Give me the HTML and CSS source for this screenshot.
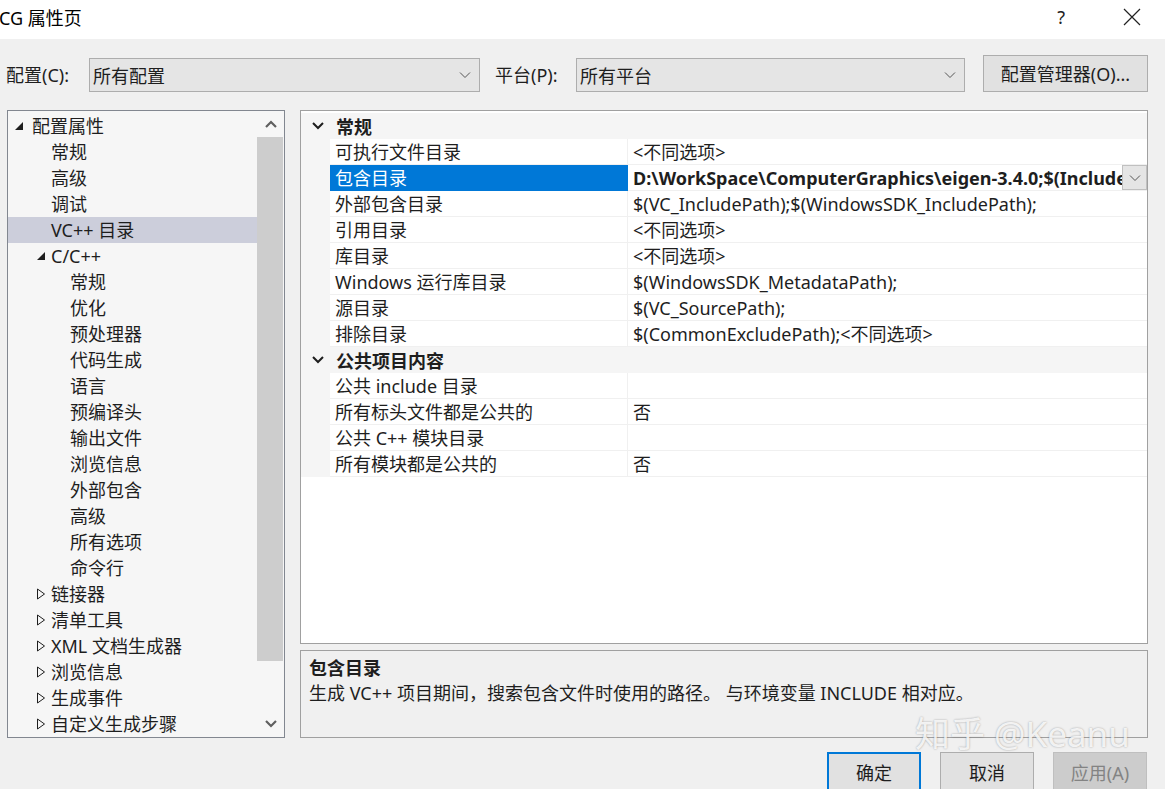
FILE: index.html
```html
<!DOCTYPE html>
<html lang="zh-CN">
<head>
<meta charset="utf-8">
<title>CG 属性页</title>
<link rel="stylesheet" href="styles.css">
</head>
<body>
<div class="dialog">
  <div class="titlebar">
    <div class="title">CG 属性页</div>
    <div class="title-actions">
      <span class="help">?</span>
      <svg class="close" width="18" height="18" viewBox="0 0 18 18"><path d="M1 1 L17 17 M17 1 L1 17" stroke="#222" stroke-width="1.2" fill="none"/></svg>
    </div>
  </div>

  <div class="config-row">
    <span class="label lbl-config">配置(C):</span>
    <div class="combo combo-config"><span>所有配置</span><svg class="chev" width="12" height="8" viewBox="0 0 12 8"><path d="M1 1.5 L6 6.5 L11 1.5" stroke="#555" stroke-width="1" fill="none"/></svg></div>
    <span class="label lbl-platform">平台(P):</span>
    <div class="combo combo-platform"><span>所有平台</span><svg class="chev" width="12" height="8" viewBox="0 0 12 8"><path d="M1 1.5 L6 6.5 L11 1.5" stroke="#555" stroke-width="1" fill="none"/></svg></div>
    <button class="btn btn-manager">配置管理器(O)...</button>
  </div>

  <div class="main">
    <div class="tree">
      <div class="tree-items">
        <div class="ti l0"><svg class="tri" width="10" height="10" viewBox="0 0 10 10"><path d="M9 1 L9 9 L1 9 Z" fill="#1e1e1e"/></svg>配置属性</div>
        <div class="ti l1">常规</div>
        <div class="ti l1">高级</div>
        <div class="ti l1">调试</div>
        <div class="ti l1 sel">VC++ 目录</div>
        <div class="ti l1x"><svg class="tri" width="10" height="10" viewBox="0 0 10 10"><path d="M9 1 L9 9 L1 9 Z" fill="#1e1e1e"/></svg>C/C++</div>
        <div class="ti l2">常规</div>
        <div class="ti l2">优化</div>
        <div class="ti l2">预处理器</div>
        <div class="ti l2">代码生成</div>
        <div class="ti l2">语言</div>
        <div class="ti l2">预编译头</div>
        <div class="ti l2">输出文件</div>
        <div class="ti l2">浏览信息</div>
        <div class="ti l2">外部包含</div>
        <div class="ti l2">高级</div>
        <div class="ti l2">所有选项</div>
        <div class="ti l2">命令行</div>
        <div class="ti l1x"><svg class="tri" width="10" height="12" viewBox="0 0 10 12"><path d="M1.5 1 L8.5 6 L1.5 11 Z" stroke="#1e1e1e" stroke-width="1" fill="none"/></svg>链接器</div>
        <div class="ti l1x"><svg class="tri" width="10" height="12" viewBox="0 0 10 12"><path d="M1.5 1 L8.5 6 L1.5 11 Z" stroke="#1e1e1e" stroke-width="1" fill="none"/></svg>清单工具</div>
        <div class="ti l1x"><svg class="tri" width="10" height="12" viewBox="0 0 10 12"><path d="M1.5 1 L8.5 6 L1.5 11 Z" stroke="#1e1e1e" stroke-width="1" fill="none"/></svg>XML 文档生成器</div>
        <div class="ti l1x"><svg class="tri" width="10" height="12" viewBox="0 0 10 12"><path d="M1.5 1 L8.5 6 L1.5 11 Z" stroke="#1e1e1e" stroke-width="1" fill="none"/></svg>浏览信息</div>
        <div class="ti l1x"><svg class="tri" width="10" height="12" viewBox="0 0 10 12"><path d="M1.5 1 L8.5 6 L1.5 11 Z" stroke="#1e1e1e" stroke-width="1" fill="none"/></svg>生成事件</div>
        <div class="ti l1x"><svg class="tri" width="10" height="12" viewBox="0 0 10 12"><path d="M1.5 1 L8.5 6 L1.5 11 Z" stroke="#1e1e1e" stroke-width="1" fill="none"/></svg>自定义生成步骤</div>
      </div>
      <div class="vscroll">
        <div class="sb-arrow"><svg width="14" height="10" viewBox="0 0 14 10"><path d="M2 8 L7 3 L12 8" stroke="#606060" stroke-width="2.2" fill="none"/></svg></div>
        <div class="sb-track"><div class="sb-thumb"></div></div>
        <div class="sb-arrow"><svg width="14" height="10" viewBox="0 0 14 10"><path d="M2 2 L7 7 L12 2" stroke="#606060" stroke-width="2.2" fill="none"/></svg></div>
      </div>
    </div>

    <div class="right">
      <div class="grid">
        <div class="cat"><svg class="cat-chev" width="14" height="10" viewBox="0 0 14 10"><path d="M2 2 L7 7 L12 2" stroke="#1e1e1e" stroke-width="2" fill="none"/></svg><span>常规</span></div>
        <div class="row"><div class="gut"></div><div class="name">可执行文件目录</div><div class="val">&lt;不同选项&gt;</div></div>
        <div class="row selrow"><div class="gut"></div><div class="name">包含目录</div><div class="val bold"><span class="clip">D:\WorkSpace\ComputerGraphics\eigen-3.4.0;$(IncludePath)</span><div class="ddbtn"><svg width="12" height="8" viewBox="0 0 12 8"><path d="M1 1.5 L6 6.5 L11 1.5" stroke="#555" stroke-width="1" fill="none"/></svg></div></div></div>
        <div class="row"><div class="gut"></div><div class="name">外部包含目录</div><div class="val">$(VC_IncludePath);$(WindowsSDK_IncludePath);</div></div>
        <div class="row"><div class="gut"></div><div class="name">引用目录</div><div class="val">&lt;不同选项&gt;</div></div>
        <div class="row"><div class="gut"></div><div class="name">库目录</div><div class="val">&lt;不同选项&gt;</div></div>
        <div class="row"><div class="gut"></div><div class="name">Windows 运行库目录</div><div class="val">$(WindowsSDK_MetadataPath);</div></div>
        <div class="row"><div class="gut"></div><div class="name">源目录</div><div class="val">$(VC_SourcePath);</div></div>
        <div class="row"><div class="gut"></div><div class="name">排除目录</div><div class="val">$(CommonExcludePath);&lt;不同选项&gt;</div></div>
        <div class="cat"><svg class="cat-chev" width="14" height="10" viewBox="0 0 14 10"><path d="M2 2 L7 7 L12 2" stroke="#1e1e1e" stroke-width="2" fill="none"/></svg><span>公共项目内容</span></div>
        <div class="row"><div class="gut"></div><div class="name">公共 include 目录</div><div class="val"></div></div>
        <div class="row"><div class="gut"></div><div class="name">所有标头文件都是公共的</div><div class="val">否</div></div>
        <div class="row"><div class="gut"></div><div class="name">公共 C++ 模块目录</div><div class="val"></div></div>
        <div class="row"><div class="gut"></div><div class="name">所有模块都是公共的</div><div class="val">否</div></div>
      </div>
      <div class="desc">
        <div class="desc-title">包含目录</div>
        <div class="desc-text">生成 VC++ 项目期间，搜索包含文件时使用的路径。 与环境变量 INCLUDE 相对应。</div>
      </div>
    </div>
  </div>

  <div class="buttons">
    <button class="btn btn-ok">确定</button>
    <button class="btn btn-cancel">取消</button>
    <button class="btn btn-apply" disabled>应用(A)</button>
  </div>

  <div class="watermark">知乎 @Keanu</div>
</div>
</body>
</html>
```

FILE: styles.css
```css
* { box-sizing: border-box; }
html, body { margin: 0; padding: 0; }
body {
  width: 1165px;
  height: 789px;
  overflow: hidden;
  background: #f0f0f0;
  font-family: "Noto Sans", "Noto Sans CJK SC", sans-serif;
  font-size: 18px;
  color: #1e1e1e;
}
.dialog { position: relative; width: 1165px; height: 789px; }

.titlebar {
  height: 39px;
  background: #ffffff;
  display: flex;
  align-items: center;
  justify-content: space-between;
}
.title { font-size: 18px; margin-left: -1px; color: #000; line-height: 24px; margin-top: -4px; }
.title-actions { display: flex; align-items: center; margin-top: -6px; }
.help { font-size: 18px; color: #222; margin-right: 58px; }
.close { margin-right: 24px; }

.config-row {
  display: flex;
  align-items: center;
  height: 36px;
  margin-top: 18px;
}
.label { font-size: 18px; line-height: 24px; }
.lbl-config { margin-left: 6px; width: 83px; }
.lbl-platform { margin-left: 15px; width: 81px; }
.combo {
  height: 34px;
  background: #e5e5e5;
  border: 1px solid #adadad;
  display: flex;
  align-items: center;
  justify-content: space-between;
  padding: 0 8px 0 3px;
  font-size: 18px;
}
.combo-config { width: 391px; }
.combo-platform { width: 389px; }
.btn {
  font-family: inherit;
  font-size: 18px;
  color: #1e1e1e;
  background: #e1e1e1;
  border: 1px solid #adadad;
  padding: 0;
}
.btn-manager { width: 165px; height: 37px; margin-left: 18px; margin-top: -4px; }

.main {
  display: flex;
  margin-top: 17px;
  margin-left: 7px;
  height: 628px;
}
.tree {
  width: 278px;
  height: 628px;
  border: 1px solid #828790;
  background: #f6f6f6;
  display: flex;
}
.tree-items { flex: 1; padding-top: 2px; }
.ti {
  height: 26px;
  line-height: 26px;
  font-size: 18px;
  white-space: nowrap;
  display: flex;
  align-items: center;
}
.ti .tri { flex: none; }
.l0 { padding-left: 6px; }
.l0 .tri { margin-right: 8px; }
.l1 { padding-left: 43px; }
.l1x { padding-left: 28px; }
.l1x .tri { margin-right: 5px; }
.l2 { padding-left: 62px; }
.sel { background: #cccedb; }

.vscroll {
  width: 27px;
  display: flex;
  flex-direction: column;
  background: #f6f6f6;
}
.sb-arrow { height: 26px; display: flex; align-items: center; justify-content: center; }
.sb-track { flex: 1; position: relative; }
.sb-thumb { position: absolute; top: 0; left: 0; right: 1px; height: 524px; background: #cdcdcd; }

.right {
  margin-left: 15px;
  width: 848px;
  display: flex;
  flex-direction: column;
  gap: 6px;
}
.grid {
  height: 534px;
  border: 1px solid #a0a0a0;
  background: #ffffff;
  padding-top: 2px;
}
.cat {
  height: 26px;
  background: #f5f5f5;
  display: flex;
  align-items: center;
  font-weight: bold;
  font-size: 18px;
}
.cat-chev { margin-left: 10px; margin-right: 11px; }
.row { height: 26px; display: flex; font-size: 18px; }
.gut { width: 29px; background: #f5f5f5; flex: none; }
.name {
  width: 298px;
  flex: none;
  padding-left: 5px;
  line-height: 27px;
  border-bottom: 1px solid #f0f0f0;
  border-right: 1px solid #f0f0f0;
  white-space: nowrap;
}
.val {
  flex: 1;
  padding-left: 5px;
  line-height: 27px;
  border-bottom: 1px solid #f0f0f0;
  white-space: nowrap;
  overflow: hidden;
  position: relative;
}
.selrow .name { background: #0078d7; color: #fff; border-color: #0078d7; }
.bold { font-weight: bold; display: flex; }
.clip { overflow: hidden; flex: 1; }
.ddbtn {
  width: 25px;
  height: 25px;
  flex: none;
  background: #e5e5e5;
  border: 1px solid #c0c0c0;
  display: flex;
  align-items: center;
  justify-content: center;
}

.desc {
  height: 88px;
  border: 1px solid #a0a0a0;
  background: #f0f0f0;
  padding: 4px 8px;
}
.desc-title { font-weight: bold; font-size: 18px; line-height: 26px; }
.desc-text { font-size: 18px; line-height: 24px; }

.buttons {
  display: flex;
  justify-content: flex-end;
  gap: 19px;
  margin-top: 14px;
  margin-right: 18px;
}
.btn-ok, .btn-cancel, .btn-apply { width: 94px; height: 40px; }
.btn-ok { border: 2px solid #0078d7; }
.btn-apply { background: #cccccc; color: #838383; border-color: #bfbfbf; }

.watermark {
  position: absolute;
  left: 915px;
  top: 717px;
  font-size: 35px;
  line-height: 34px;
  color: rgba(255,255,255,0.85);
  text-shadow: 0 0 2px rgba(0,0,0,0.35);
  pointer-events: none;
}
```
